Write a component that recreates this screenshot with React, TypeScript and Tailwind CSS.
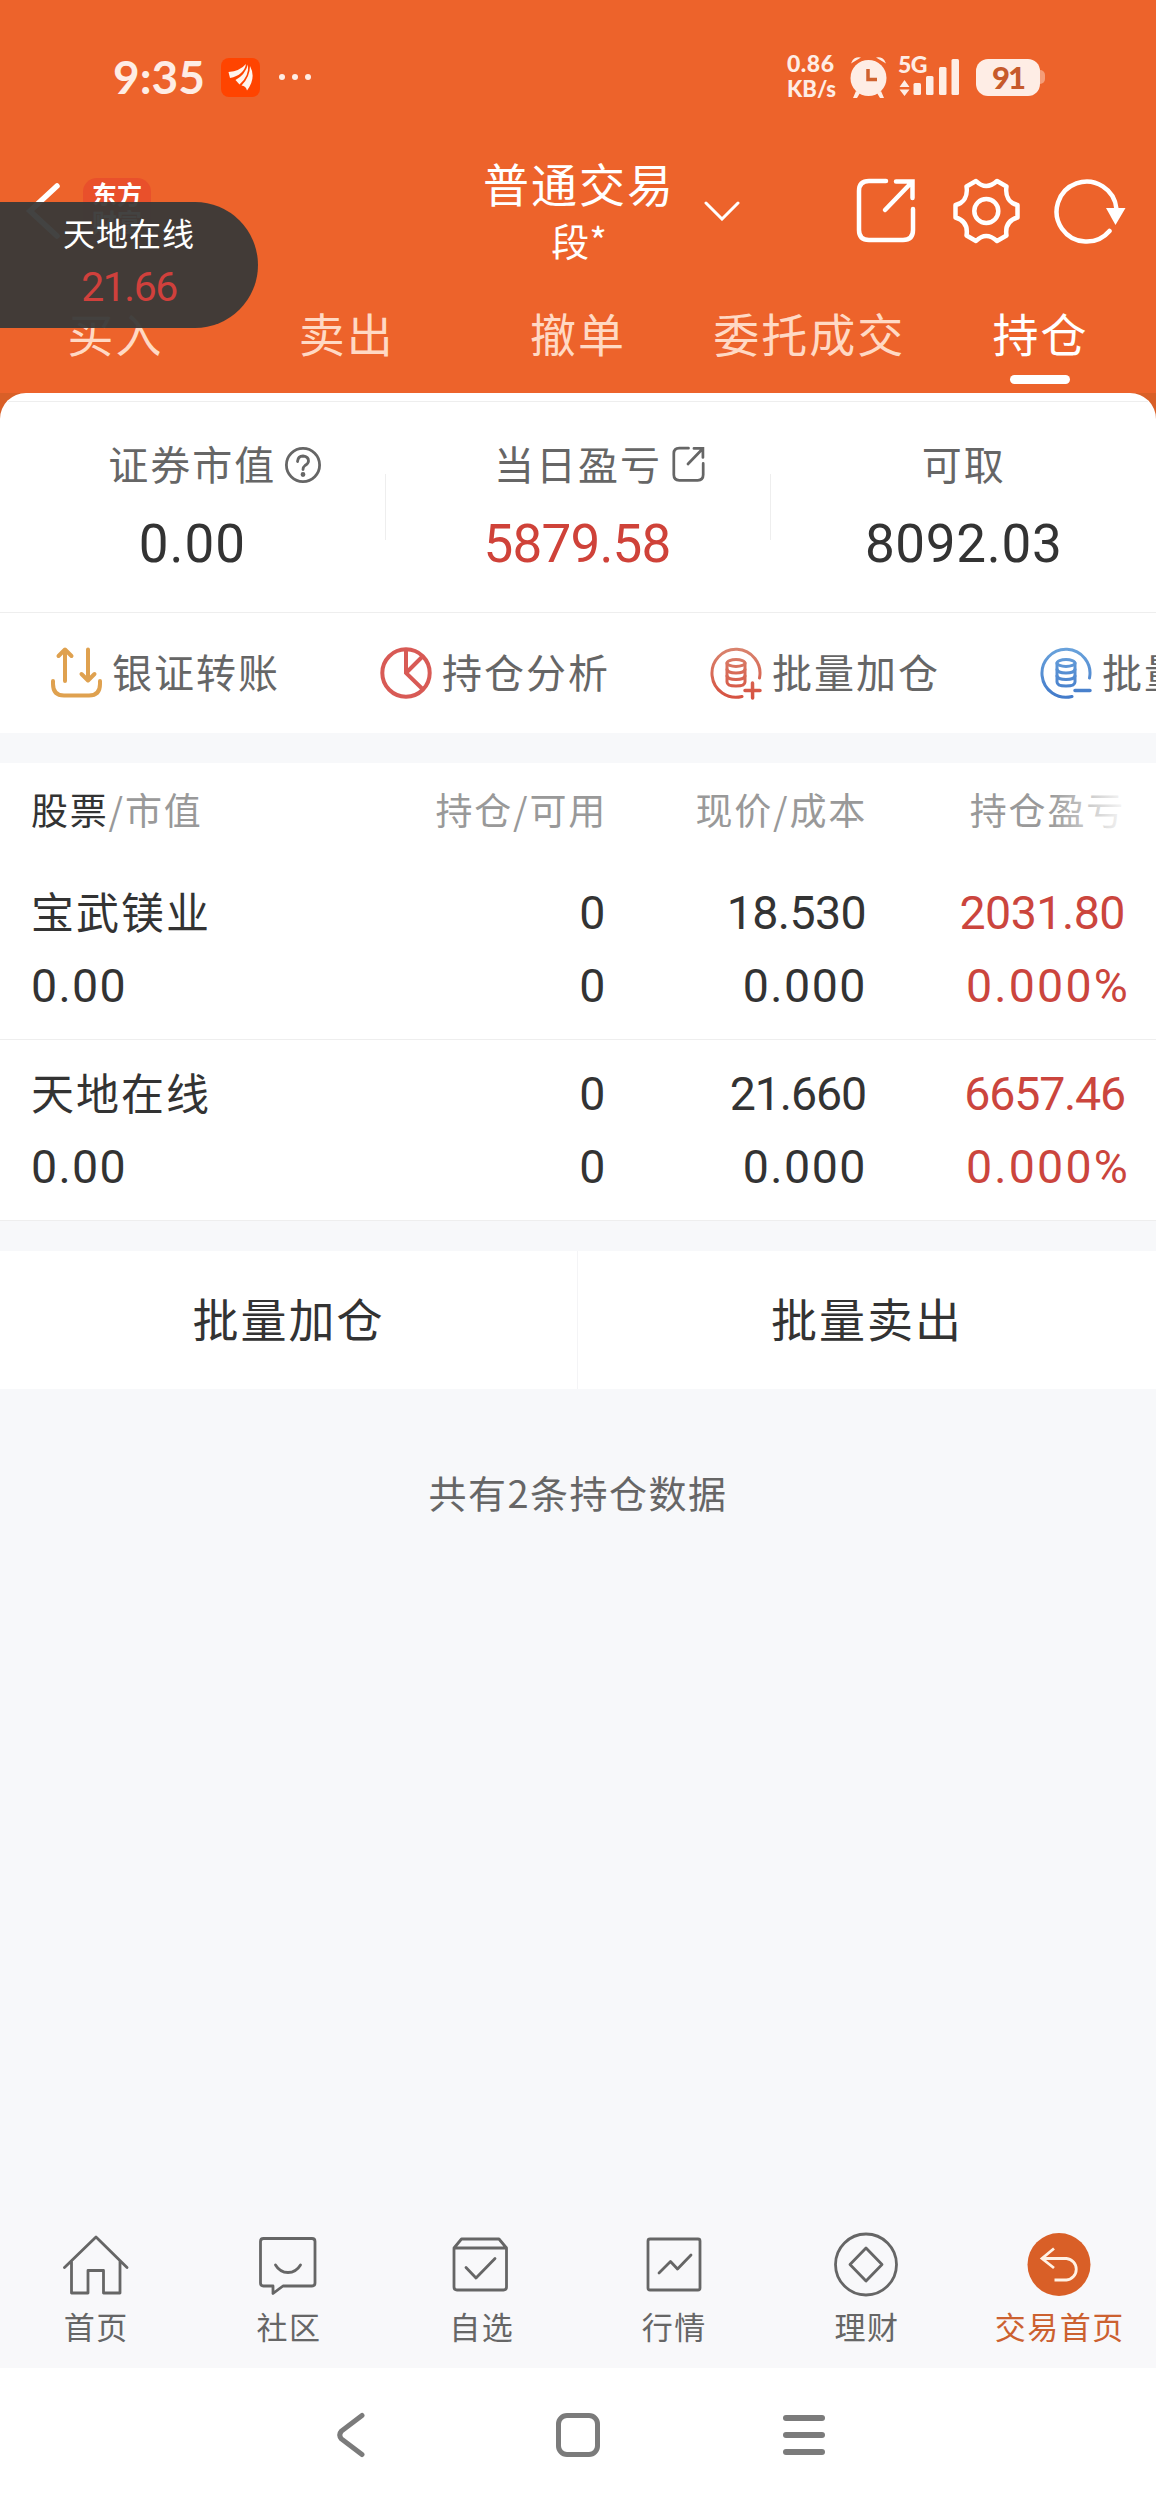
import React from 'react';
import clsx from 'clsx';

interface Holding {
  name: string;
  marketValue: string;
  amount: string;
  available: string;
  price: string;
  priceClass: string;
  cost: string;
  profit: string;
  profitClass: string;
  profitRate: string;
}

const holdings: Holding[] = [
  {
    name: '宝武镁业',
    marketValue: '0.00',
    amount: '0',
    available: '0',
    price: '18.530',
    priceClass: 'tracking-[-0.6px] pr-px',
    cost: '0.000',
    profit: '2031.80',
    profitClass: 'tracking-[-0.5px]',
    profitRate: '0.000%',
  },
  {
    name: '天地在线',
    marketValue: '0.00',
    amount: '0',
    available: '0',
    price: '21.660',
    priceClass: 'tracking-[-1.1px] pr-px',
    cost: '0.000',
    profit: '6657.46',
    profitClass: 'tracking-[-1.2px]',
    profitRate: '0.000%',
  },
];

const tabs = ['买入', '卖出', '撤单', '委托成交', '持仓'];

function ShareIcon({ className, strokeWidth }: { className: string; strokeWidth: number }) {
  return (
    <svg viewBox="0 0 62 68" className={className} fill="none" stroke="currentColor" strokeWidth={strokeWidth} strokeLinecap="round">
      <path d="M31 4H14Q4 4 4 14V53Q4 63 14 63H48Q58 63 58 53V32" />
      <path d="M41 4.500H57.500V21M57 5L30 33" />
    </svg>
  );
}

function StatusBar() {
  return (
    <div className="flex h-[154px] items-center text-[#FEEDE5]">
      <div className="ml-[113px] w-[108px] font-[Lato] text-[46px] leading-none font-bold">9:35</div>
      <svg viewBox="0 0 39 39" className="h-[39px] w-[39px]">
        <rect width="39" height="39" rx="8" fill="#FF4400" />
        <g fill="#FFF5EE">
          <path d="M7.500 14Q19 13 25 6Q23 17 9 20Z" />
          <path d="M14.500 22Q24 17 27 6.500Q28.500 18 18.500 26.500Z" />
          <path d="M20.500 27.500Q29 19 29 8Q35.500 20 26 32.500Q25 28 20.500 27.500Z" />
        </g>
      </svg>
      <div className="ml-[19px] flex gap-[7px]">
        <span className="h-[6px] w-[6px] rounded-full bg-[#FEEDE5]" />
        <span className="h-[6px] w-[6px] rounded-full bg-[#FEEDE5]" />
        <span className="h-[6px] w-[6px] rounded-full bg-[#FEEDE5]" />
      </div>
      <div className="ml-[476px] w-[63px] pb-[2px] font-[Lato] text-[23px] leading-[25px] font-black">
        <div className="tracking-[0.5px]">0.86</div>
        <div className="text-[22px]">KB/s</div>
      </div>
      <svg viewBox="0 0 38 44" className="h-[44px] w-[38px]" fill="currentColor">
        <circle cx="18.500" cy="23" r="18" />
        <path d="M1 8.500A8 8 0 0 1 11 2.500ZM36 8.500A8 8 0 0 0 26 2.500Z" />
        <path d="M6 36L3 43H7L10 38ZM31 36L34 43H30L27 38Z" />
        <path d="M18 14V24.500H27" fill="none" stroke="#D0622F" strokeWidth="3.500" />
      </svg>
      <div className="relative ml-[10px] h-[42px] w-[63px]">
        <div className="absolute -top-[3px] left-0 font-[Lato] text-[23px] leading-[22px] font-black tracking-[-0.5px]">5G</div>
        <svg viewBox="0 0 63 42" className="h-[42px] w-[63px]" fill="currentColor">
          <path d="M6.500 24L11.500 31H1.500ZM6.500 40L1.500 33.500H11.500Z" />
          <rect x="15.500" y="27" width="7.500" height="12" rx="1.500" />
          <rect x="28" y="20" width="7.500" height="19" rx="1.500" />
          <rect x="41" y="11" width="7.500" height="28" rx="1.500" />
          <rect x="53.500" y="3" width="7.500" height="36" rx="1.500" />
        </svg>
      </div>
      <div className="ml-[15px] flex h-[37px] w-[64px] items-center justify-center rounded-[12px] bg-[#FEEDE5] font-[Lato] text-[31px] leading-none font-black tracking-[-2px] text-[#C65A2B]">
        91
      </div>
      <div className="h-[14px] w-[5px] rounded-r-[5px] bg-[#F49D78]" />
    </div>
  );
}

function TitleBar() {
  return (
    <div className="flex h-[114px] items-center text-white">
      <div className="flex w-[486px] items-center">
        <svg viewBox="0 0 36 60" className="ml-[25px] h-[60px] w-[36px]" fill="none" stroke="currentColor" strokeWidth="5.500" strokeLinecap="round">
          <path d="M32 5L5 30L32 55" />
        </svg>
        <div className="ml-[22px] flex h-[67px] w-[68px] flex-col items-center justify-center rounded-[14px] bg-[#E9502B] pb-[9px] text-[25px] leading-[28px] font-bold">
          <span>东方</span>
          <span>财富</span>
        </div>
      </div>
      <div className="flex w-[186px] flex-col items-center whitespace-nowrap">
        <div className="text-[46px] leading-[56px] tracking-[2px]">普通交易</div>
        <div className="pt-[2px] text-[38px] leading-[56px]">段*</div>
      </div>
      <svg viewBox="0 0 36 20" className="ml-[32px] h-[20px] w-[36px]" fill="none" stroke="currentColor" strokeWidth="3" strokeLinecap="round">
        <path d="M2 2L18 18L34 2" />
      </svg>
      <ShareIcon className="ml-[115px] h-[68px] w-[62px]" strokeWidth={4.5} />
      <svg viewBox="0 0 70 70" className="ml-[34px] h-[70px] w-[70px]" fill="none" stroke="currentColor" strokeWidth="4.500" strokeLinejoin="round">
        <path d="M25 5Q35 15 46 5L55.500 10.500C54 20 58 27 66.500 29V41.500C58 44 54 50 55.500 59.500L46 65Q35 55 25 65L15.500 59.500C17 50 13 44 4.500 41.500V29C13 27 17 20 15.500 10.500Z" />
        <circle cx="35.300" cy="35" r="12" />
      </svg>
      <svg viewBox="0 0 74 70" className="ml-[33px] h-[70px] w-[74px]" fill="none" stroke="currentColor" strokeWidth="4.500" strokeLinecap="round">
        <path d="M55.500 55A30 30 0 1 1 62.500 33" />
        <path d="M52 32H71.500L61.500 49Z" fill="currentColor" stroke="none" />
      </svg>
    </div>
  );
}

function Tabs() {
  return (
    <div className="grid h-[125px] grid-cols-5 pt-[41px]">
      {tabs.map(tab => {
        const active = tab === '持仓';
        return (
          <div key={tab} className="flex flex-col items-center">
            <span className={clsx('text-[46px] leading-[46px] tracking-[2px]', active ? 'text-white' : 'text-[#FFD9C4]')}>{tab}</span>
            {active && <span className="mt-[20px] h-[9px] w-[60px] rounded-full bg-white" />}
          </div>
        );
      })}
    </div>
  );
}

/* 悬浮行情 */
function FloatingQuote() {
  return (
    <div className="absolute top-[202px] left-0 flex h-[126px] w-[258px] flex-col items-center rounded-r-full bg-[#393938]/95 pt-[11px]">
      <span className="text-[32px] leading-[38px] tracking-[1px] text-white">天地在线</span>
      <span className="mt-[16px] font-[Roboto] text-[41px] leading-[41px] tracking-[-1.5px] text-[#D0403C]">21.66</span>
    </div>
  );
}

function Summary() {
  return (
    <div className="relative flex h-[220px] rounded-t-[26px] border-b border-[#EEEEEE] bg-white">
      <span className="absolute top-[8px] right-[8px] left-[8px] h-px bg-[#EEEEEE]" />
      <div className="flex flex-1 flex-col items-center pt-[46px]">
        <div className="relative text-[40px] leading-[48px] tracking-[2px] text-[#666]">
          证券市值
          <svg viewBox="0 0 38 38" className="absolute top-[7px] left-full ml-[8px] h-[38px] w-[38px]" fill="none" stroke="currentColor" strokeWidth="2.800" strokeLinecap="round">
            <circle cx="19" cy="19" r="16.600" />
            <path d="M13.500 15.500Q14 10 19 10Q24.500 10.500 24.500 15Q24.500 17.500 21 19.500Q19 21 19 23.500" />
            <circle cx="19" cy="28.500" r="1" fill="currentColor" />
          </svg>
        </div>
        <div className="mt-[31px] font-[Roboto] text-[53px] leading-[53px] tracking-[1px] text-[#333]">0.00</div>
      </div>
      <div className="mt-[81px] h-[66px] w-px bg-[#EEEEEE]" />
      <div className="flex flex-1 flex-col items-center pt-[46px]">
        <div className="relative text-[40px] leading-[48px] tracking-[2px] text-[#666]">
          当日盈亏
          <ShareIcon className="absolute top-[7px] left-full ml-[8px] h-[37px] w-[37px]" strokeWidth={5} />
        </div>
        <div className="mt-[31px] pr-[2px] font-[Roboto] text-[53px] leading-[53px] tracking-[-0.8px] text-[#CF4239]">5879.58</div>
      </div>
      <div className="mt-[81px] h-[66px] w-px bg-[#EEEEEE]" />
      <div className="flex flex-1 flex-col items-center pt-[46px]">
        <div className="text-[40px] leading-[48px] tracking-[2px] text-[#666]">可取</div>
        <div className="mt-[31px] font-[Roboto] text-[53px] leading-[53px] tracking-[0.7px] text-[#333]">8092.03</div>
      </div>
    </div>
  );
}

function CoinsIcon({ id, from, to, minus }: { id: string; from: string; to: string; minus?: boolean }) {
  return (
    <svg viewBox="0 0 54 54" className="h-[54px] w-[54px] shrink-0" fill="none" stroke={`url(#${id})`} strokeWidth="3" strokeLinecap="round">
      <defs>
        <linearGradient id={id} gradientUnits="userSpaceOnUse" x1="0" y1="0" x2="0" y2="54">
          <stop offset="0" stopColor={from} />
          <stop offset="1" stopColor={to} />
        </linearGradient>
      </defs>
      <path d="M50.500 32A24 24 0 1 0 33 50.500" />
      <ellipse cx="27" cy="17" rx="9" ry="3.500" />
      <path d="M18 17V36Q18 40 27 40Q36 40 36 36V17" />
      <path d="M18 23.500Q19 27 27 27Q35 27 36 23.500M18 30Q19 33.500 27 33.500Q35 33.500 36 30" />
      <path d={minus ? 'M36 44.500L51 44.600' : 'M36 44.500L51 44.600M43.500 37L43.600 52'} strokeWidth="3.500" />
    </svg>
  );
}

function Toolbar() {
  const item = 'flex w-[330px] shrink-0 items-center gap-[9px]';
  const label = 'whitespace-nowrap text-[40px] leading-[48px] tracking-[2px] -mt-[5px] text-[#666]';
  return (
    <div className="flex h-[120px] items-center overflow-hidden bg-white pl-[49px]">
      <div className={item}>
        <svg viewBox="0 0 54 54" className="h-[54px] w-[54px] shrink-0" fill="none" stroke="#DFA14F" strokeWidth="4" strokeLinecap="round" strokeLinejoin="round">
          <path d="M16 35V4M9.500 10L16 3.500L22.500 10" />
          <path d="M39 3.500V33M32.500 28L39 34.500L45.500 28" />
          <path d="M4 35V38Q4 49.500 15 49.500H40Q51 49.500 51 38V35" />
        </svg>
        <span className={label}>银证转账</span>
      </div>
      <div className={item}>
        <svg viewBox="0 0 54 54" className="h-[54px] w-[54px] shrink-0" fill="none" stroke="#D85A55" strokeWidth="4">
          <circle cx="27" cy="27" r="23.700" />
          <path d="M27 3V27L44 43.500M27 27L44 10" />
        </svg>
        <span className={label}>持仓分析</span>
      </div>
      <div className={item}>
        <CoinsIcon id="coins-add" from="#D98670" to="#D6503F" />
        <span className={label}>批量加仓</span>
      </div>
      <div className={item}>
        <CoinsIcon id="coins-sell" from="#6BA4DC" to="#4179C9" minus />
        <span className={label}>批量卖出</span>
      </div>
    </div>
  );
}

const columns = 'grid grid-cols-[333px_243px_260px_258px] pl-[31px]';

function HoldingsTable() {
  return (
    <div className="bg-white">
      <div className={clsx(columns, 'relative h-[96px] pt-[22px] text-right text-[37px] leading-[48px] tracking-[1.8px] whitespace-nowrap text-[#999]')}>
        <div className="text-left">
          <span className="text-[#333]">股票</span>/市值
        </div>
        <div>持仓/可用</div>
        <div>现价/成本</div>
        <div>持仓盈亏</div>
        <span className="absolute top-0 right-[26px] h-[91px] w-[80px] bg-linear-to-r from-white/0 to-white" />
      </div>
      {holdings.map(row => (
        <div
          key={row.name}
          className={clsx(columns, 'h-[181px] grid-rows-[73px_73px] border-b border-[#EEEEEE] pt-[18px] text-right font-[Roboto] text-[46.5px] leading-[73px] tracking-[1.5px] text-[#333]')}
        >
          <div className="text-left font-['Noto_Sans_CJK_SC'] text-[43px] leading-[66px] tracking-[2px]">{row.name}</div>
          <div>{row.amount}</div>
          <div className={row.priceClass}>{row.price}</div>
          <div className={clsx('text-[#CB453D]', row.profitClass)}>{row.profit}</div>
          <div className="text-left tracking-[1.3px]">{row.marketValue}</div>
          <div>{row.available}</div>
          <div>{row.cost}</div>
          <div className="-mr-[5px] tracking-[2.2px] text-[#CB453D]">{row.profitRate}</div>
        </div>
      ))}
    </div>
  );
}

const navIconProps = {
  viewBox: '0 0 72 72',
  className: 'h-[72px] w-[72px] -ml-px',
  fill: 'none',
  stroke: 'currentColor',
  strokeWidth: 2.8,
  strokeLinecap: 'round' as const,
  strokeLinejoin: 'round' as const,
};

const navItems = [
  {
    label: '首页',
    icon: (
      <svg {...navIconProps}>
        <path d="M4.500 38.500L36 8L67 38.500M11.500 32V64H28V41.500H43.500V64H60V32" />
      </svg>
    ),
  },
  {
    label: '社区',
    icon: (
      <svg {...navIconProps}>
        <path d="M11.500 9.500H60Q63 9.500 63 12.500V54Q63 57 60 57H31L21 64.500V57H11.500Q8.500 57 8.500 54V12.500Q8.500 9.500 11.500 9.500Z" />
        <path d="M23.500 36Q28 43.500 36 43.500Q44 43.500 48.500 36" />
      </svg>
    ),
  },
  {
    label: '自选',
    icon: (
      <svg {...navIconProps}>
        <path d="M9 19L16.500 10H54L61.500 19V58Q61.500 61 58.500 61H12Q9 61 9 58ZM9 19H61.500" />
        <path d="M21 38.500L31 49L50 29.500" />
      </svg>
    ),
  },
  {
    label: '行情',
    icon: (
      <svg {...navIconProps}>
        <rect x="10" y="10" width="52" height="51" rx="2" />
        <path d="M21 44L32.500 32.500L39.500 40L53 26" />
      </svg>
    ),
  },
  {
    label: '理财',
    icon: (
      <svg {...navIconProps}>
        <circle cx="36" cy="35.500" r="30.500" />
        <path d="M36 19L52 35.500L36 52L20 35.500Z" />
      </svg>
    ),
  },
  {
    label: '交易首页',
    active: true,
    icon: (
      <svg {...navIconProps}>
        <circle cx="36" cy="35.500" r="31.500" fill="#D95F27" stroke="none" />
        <path d="M31 19.500L19 29.500L31 39M20 29.500H43.500A10.800 10.800 0 0 1 43.500 51H31.500" stroke="#FFF1E4" strokeLinecap="butt" strokeLinejoin="miter" />
      </svg>
    ),
  },
];

function BottomNav() {
  return (
    <div className="grid h-[158px] grid-cols-6 bg-[#F8F8FA] pt-[19px]">
      {navItems.map(item => (
        <div key={item.label} className={clsx('flex flex-col items-center', item.active ? 'text-[#CC6130]' : 'text-[#666]')}>
          {item.icon}
          <span className="mt-[5px] text-[31px] leading-[40px] tracking-[1.5px]">{item.label}</span>
        </div>
      ))}
    </div>
  );
}

function SystemNav() {
  return (
    <div className="flex h-[142px] items-center bg-white pb-[8px] text-[#7B7B7B]">
      <svg viewBox="0 0 30 46" className="ml-[336px] h-[46px] w-[30px]" fill="none" stroke="currentColor" strokeWidth="5" strokeLinecap="round">
        <path d="M26 3.500L5.500 19Q2 23 5.500 27L26 42.500" />
      </svg>
      <div className="ml-[190px] h-[44px] w-[44px] rounded-[11px] border-[5px] border-[#7B7B7B]" />
      <div className="ml-[183px] flex w-[42px] flex-col gap-[11px]">
        <span className="h-[6px] rounded-full bg-[#7B7B7B]" />
        <span className="h-[6px] rounded-full bg-[#7B7B7B]" />
        <span className="h-[6px] rounded-full bg-[#7B7B7B]" />
      </div>
    </div>
  );
}

export default function App() {
  return (
    <div className="relative flex h-[2510px] w-[1156px] flex-col overflow-hidden bg-[#F7F8FA] font-['Noto_Sans_CJK_SC',sans-serif]">
      <div className="bg-[#ED632B]">
        <StatusBar />
        <TitleBar />
        <Tabs />
      </div>
      <div className="bg-[#D95F27]">
        <Summary />
      </div>
      <Toolbar />
      <div className="h-[30px]" />
      <HoldingsTable />
      <div className="h-[30px]" />
      <div className="grid h-[138px] grid-cols-2 bg-white text-center text-[46px] leading-[132px] tracking-[2px] text-[#333]">
        <div className="border-r border-[#F4F4F6]">批量加仓</div>
        <div>批量卖出</div>
      </div>
      <div className="mt-[78px] text-center text-[38px] leading-[50px] tracking-[1.5px] text-[#666]">共有2条持仓数据</div>
      <div className="mt-auto">
        <BottomNav />
        <SystemNav />
      </div>
      <FloatingQuote />
    </div>
  );
}
